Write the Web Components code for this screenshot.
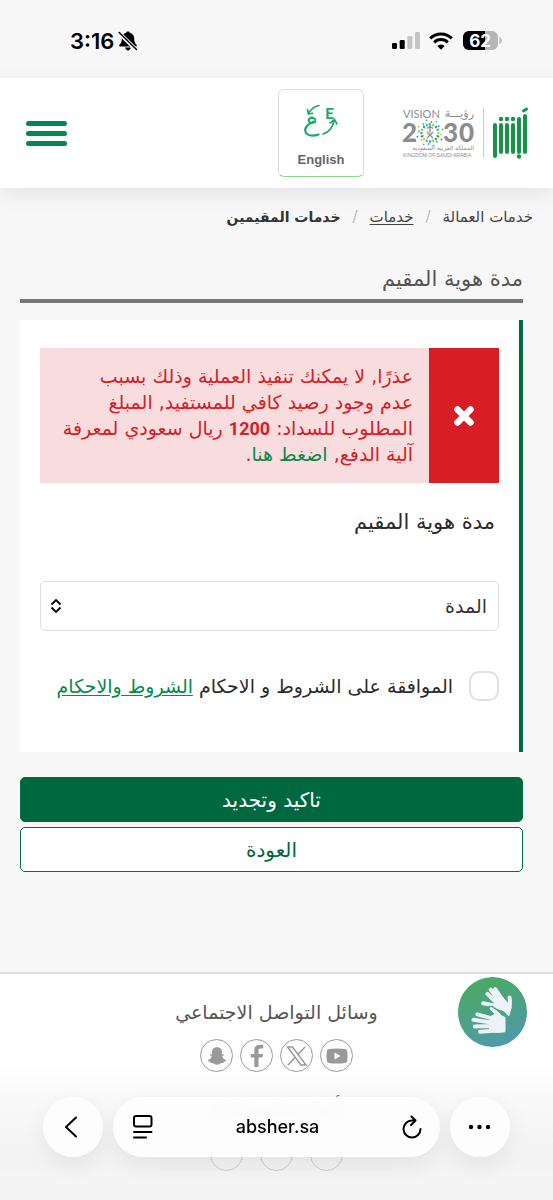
<!DOCTYPE html>
<html lang="ar" dir="rtl">
<head>
<meta charset="utf-8">
<meta name="viewport" content="width=device-width, initial-scale=1">
<title>مدة هوية المقيم</title>
<style>
  body {
    margin: 0;
    background: #f7f7f7;
    color: #2b2b2b;
    font: 19px/26px "DejaVu Sans", sans-serif;
  }
</style>
</head>
<body>
<absher-page></absher-page>

<script>
class StatusBar extends HTMLElement {
  constructor() {
    super();
    this.attachShadow({ mode: 'open' }).innerHTML = `
      <style>
        :host {
          display: flex;
          direction: ltr;
          align-items: center;
          box-sizing: border-box;
          height: 78px;
          padding: 4px 51px 0 70px;
          gap: 9px;
          color: #000;
          font: 600 22px/26px Inter, sans-serif;
        }
        .time { display: flex; align-items: center; gap: 4px; margin-right: auto; }
        svg { display: block; }
        .battery { font: 700 17px Inter, sans-serif; }
      </style>
      <div class="time">
        <span>3:16</span>
        <svg width="20" height="20" viewBox="0 0 20 20">
          <path d="M10 .5c.9 0 1.600.5 1.700 1.300 3 .7 4.500 3 4.500 5.900 0 3.400.9 4.600 2.300 6 .7.700.4 1.700-.6 1.700H2.100c-1 0-1.300-1-.6-1.700 1.400-1.400 2.300-2.600 2.300-6 0-2.900 1.500-5.200 4.500-5.900C8.400 1 9.100.5 10 .5zM7.200 16.600h5.600C12.600 18.300 11.500 19.500 10 19.500s-2.600-1.200-2.800-2.900z"/>
          <path d="M1 2l18 17.500" stroke="#f7f7f7" stroke-width="4"/>
          <path d="M1.200 1.500l17.300 17" stroke="#000" stroke-width="1.500" stroke-linecap="round"/>
        </svg>
      </div>
      <svg width="28" height="18" viewBox="0 0 28 18">
        <rect x="0" y="11" width="5" height="6" rx="1.300"/>
        <rect x="7.700" y="8" width="5" height="9" rx="1.300"/>
        <rect x="15.400" y="4" width="5" height="13" rx="1.300" fill="#c4c4c4"/>
        <rect x="23" y="0" width="5" height="17" rx="1.300" fill="#c4c4c4"/>
      </svg>
      <svg width="24" height="18" viewBox="0 0 24 18" fill="none" stroke="#000" stroke-width="3">
        <path d="M1.200 6.300a15.500 15.500 0 0 1 21.600 0"/>
        <path d="M5.200 10.300a9.800 9.800 0 0 1 13.600 0"/>
        <path d="M12 17.800l-3.700-3.700a5.300 5.300 0 0 1 7.400 0z" fill="#000" stroke="none"/>
      </svg>
      <svg class="battery" width="40" height="20" viewBox="0 0 40 20">
        <clipPath id="cell"><rect x="1" y="0" width="35" height="19" rx="6"/></clipPath>
        <g clip-path="url(#cell)">
          <rect width="36" height="19" fill="#b5b5b5"/>
          <rect width="23" height="19"/>
        </g>
        <path d="M37.500 6c3 1 3 6 0 7z" fill="#b5b5b5"/>
        <text x="18" y="16" text-anchor="middle" fill="#fff">62</text>
      </svg>`;
  }
}

class BrandLogo extends HTMLElement {
  constructor() {
    super();
    // the ring of the emblem: small marks turned round one centre
    const colors = ['#3fae6a', '#8fc75a', '#2a9fc9', '#4fb58c', '#b5cf4a', '#2e8f9b'];
    let ring = '';
    for (let i = 0; i < 16; i++) {
      const c = colors[i % 6];
      const r = i % 2 ? 14 : 16;
      ring += `<g transform="rotate(${i * 22.5} 27 27)" fill="${c}"><path d="M27 20.500l1.300-2-1.300-2-1.300 2z"/><circle cx="28.500" cy="${r}" r=".9"/></g>`;
    }
    this.attachShadow({ mode: 'open' }).innerHTML = `
      <style>
        :host { display: flex; direction: ltr; align-items: center; gap: 9px; }
        svg { display: block; overflow: visible; }
        .rule { width: 1px; height: 50px; background: #ccc; }
      </style>
      <svg width="71" height="54" viewBox="0 0 71 54" fill="#8b8c8e">
        <text x="0" y="12" font-family="Lato" font-size="11">VISION</text>
        <text x="71" y="11" font-family="DejaVu Sans" font-size="11" direction="rtl">رؤيـــة</text>
        <g font-family="Lato" font-weight="900" font-size="26">
          <text x="-1" y="36">2</text>
          <text x="40" y="36">3</text>
          <text x="56" y="36">0</text>
        </g>
        ${ring}
        <path d="M27 20.500v6M24 22.500l3-2 3 2M24 26l6 6M30 26l-6 6" stroke="#8b8c8e" stroke-width="1.300" fill="none"/>
        <text x="71" y="44" font-family="DejaVu Sans" font-size="6" direction="rtl">المملكة العربية السعودية</text>
        <text x="0" y="51" font-family="Liberation Sans" font-size="5">KINGDOM OF SAUDI ARABIA</text>
      </svg>
      <div class="rule"></div>
      <svg width="34" height="52" viewBox="0 0 34 52" stroke="#159447" stroke-width="4" stroke-linecap="round" fill="none">
        <path d="M2 18v31M8 18v27M14 18v27M20 18v27M26 12v33M32 9v36"/>
        <path d="M30.500 4l3-2" stroke-width="3"/>
        <g fill="#159447" stroke="none">
          <circle cx="8" cy="12" r="2.200"/><circle cx="14" cy="12" r="2.200"/><circle cx="20" cy="12" r="2.200"/>
          <circle cx="26" cy="49.500" r="2.200"/>
        </g>
      </svg>`;
  }
}

class SiteHeader extends HTMLElement {
  constructor() {
    super();
    this.attachShadow({ mode: 'open' }).innerHTML = `
      <style>
        :host {
          display: flex;
          align-items: center;
          box-sizing: border-box;
          height: 110px;
          padding: 0 26px;
          gap: 39px;
          background: #fff;
          box-shadow: 0 6px 20px rgba(0, 0, 0, .08);
        }
        button { padding: 0; background: none; cursor: pointer; }
        .lang {
          display: flex;
          direction: ltr;
          flex-direction: column;
          align-items: center;
          justify-content: flex-end;
          box-sizing: border-box;
          width: 86px;
          height: 88px;
          padding-bottom: 8px;
          gap: 15px;
          border: 1px solid #ddd;
          border-bottom-color: #8ed68a;
          border-radius: 6px;
          color: #666;
          font: 700 13px/16px "Liberation Sans", sans-serif;
        }
        .lang svg { display: block; overflow: visible; }
        .menu {
          display: grid;
          gap: 5px;
          width: 41px;
          margin-inline-start: auto;
          border: 0;
        }
        .menu i { height: 5px; border-radius: 3px; background: #068651; }
      </style>
      <brand-logo></brand-logo>
      <button class="lang" lang="en">
        <svg width="36" height="34" viewBox="0 0 36 34" fill="none" stroke="#16ab6b" stroke-width="1.600" stroke-linecap="round">
          <path d="M16 2.500C11 3.500 8 6 5.500 10.500M4.500 6.500l.8 4.500 4.500-.8"/>
          <path d="M20 31c5-1.500 9.500-6 11-13M27 20l4.500-3.500 2.500 4.500"/>
          <text x="22" y="16" fill="#16ab6b" stroke="none" font-family="Lato" font-weight="700" font-size="16">E</text>
          <path d="M12 16c-4-3.500-8.500.5-5 3.500 2 .8 4 0 6-1.500C4 20.500 0 26 3.500 30.500 6.500 33.500 11 33 15.500 31.500" stroke-width="2.200"/>
        </svg>
        English
      </button>
      <button class="menu" aria-label="القائمة"><i></i><i></i><i></i></button>`;
  }
}

class BreadCrumbs extends HTMLElement {
  constructor() {
    super();
    this.attachShadow({ mode: 'open' }).innerHTML = `
      <style>
        :host { display: block; padding: 16px 20px 0; font-size: 15px; line-height: 26px; }
        nav { display: flex; gap: 12px; }
        a { color: #444; text-decoration: none; }
        a.up { text-decoration: underline; text-underline-offset: 2px; }
        b { color: #333; font-size: 14px; }
        i { color: #bbb; font-style: normal; }
      </style>
      <nav>
        <a href="#">خدمات العمالة</a><i>/</i>
        <a class="up" href="#">خدمات</a><i>/</i>
        <b>خدمات المقيمين</b>
      </nav>`;
  }
}

class ErrorAlert extends HTMLElement {
  constructor() {
    super();
    this.attachShadow({ mode: 'open' }).innerHTML = `
      <style>
        :host { display: flex; background: #f8dcde; color: #cf1f28; }
        .mark {
          display: grid;
          place-items: center;
          flex: none;
          width: 70px;
          background: #d71e25;
        }
        p { flex: 1; margin: 0; padding: 15px 16px 16px; }
      </style>
      <div class="mark">
        <svg width="22" height="22" viewBox="0 0 22 22" stroke="#fff" stroke-width="6.500" stroke-linecap="round">
          <path d="M4.500 4.500l13 13M17.500 4.500l-13 13"/>
        </svg>
      </div>
      <p><slot></slot></p>`;
  }
}

class DurationSelect extends HTMLElement {
  constructor() {
    super();
    this.attachShadow({ mode: 'open' }).innerHTML = `
      <style>
        :host { display: block; }
        label { display: block; padding: 0 4px; font-size: 21px; }
        .box { display: grid; align-items: center; margin-top: 46px; }
        .box > * { grid-area: 1 / 1; }
        select {
          appearance: none;
          box-sizing: border-box;
          width: 100%;
          height: 50px;
          padding: 0 11px;
          border: 1px solid #dfe0e4;
          border-radius: 5px;
          background: #fff;
          color: #333;
          font: inherit;
        }
        svg { justify-self: end; margin-inline-end: 10px; pointer-events: none; }
      </style>
      <label for="duration">مدة هوية المقيم</label>
      <div class="box">
        <select id="duration"><option>المدة</option></select>
        <svg width="12" height="16" viewBox="0 0 12 16" fill="none" stroke="#000" stroke-width="1.800">
          <path d="M1.500 6.500L6 2l4.500 4.500M1.500 9.500L6 14l4.500-4.500"/>
        </svg>
      </div>`;
  }
}

class TermsCheck extends HTMLElement {
  constructor() {
    super();
    this.attachShadow({ mode: 'open' }).innerHTML = `
      <style>
        :host { display: flex; align-items: center; gap: 16px; }
        input {
          appearance: none;
          flex: none;
          width: 30px;
          height: 30px;
          margin: 0;
          border: 2px solid #dddfe4;
          border-radius: 10px;
          background: #fff;
        }
        a { color: #078a50; text-underline-offset: 2px; }
      </style>
      <input type="checkbox" id="terms">
      <div>
        <label for="terms">الموافقة على الشروط و الاحكام</label>
        <a href="#">الشروط والاحكام</a>
      </div>`;
  }
}

class ActionButton extends HTMLElement {
  constructor() {
    super();
    this.attachShadow({ mode: 'open' }).innerHTML = `
      <style>
        :host { display: block; }
        button {
          width: 100%;
          height: 45px;
          padding: 0;
          border: 1px solid #006c42;
          border-radius: 5px;
          background: #fff;
          color: #00653e;
          font: inherit;
        }
        :host([primary]) button { background: #00683f; color: #fff; }
      </style>
      <button><slot></slot></button>`;
  }
}

const handsIcon = `
  <svg width="69" height="70" viewBox="26 37 206 206" fill="none" stroke-linecap="round" stroke-linejoin="round">
    <g stroke="#edf1f8" stroke-width="12">
      <path d="M140 122L101 114M142 114L114 86M148 108L124 73M160 105L137 72M176 135c7-10 6-22 4-38"/>
      <path d="M140 114l18-12 14 16 8 10-6 20-16-6-20-14z" fill="#edf1f8"/>
    </g>
    <path d="M122 130l12 8 18 6 18 16" stroke="#4aa287" stroke-width="16"/>
    <g stroke="#edf1f8" stroke-width="12">
      <path d="M138 162L84 147M130 172L72 163M130 182L76 183M140 195l-48 4M150 152L126 128"/>
      <path d="M126 158l14-8 22 9v36l-18 2-20-3z" fill="#edf1f8"/>
    </g>
    <path d="M120 138c-6-8-2-17 8-14l14 9 20 7 14 14" stroke="#4aa287" stroke-width="4"/>
  </svg>`;

class SiteFooter extends HTMLElement {
  constructor() {
    super();
    this.attachShadow({ mode: 'open' }).innerHTML = `
      <style>
        :host {
          display: block;
          position: relative;
          padding-top: 25px;
          border-top: 2px solid #ddd;
          background: linear-gradient(#fff 90px, #f3f3f3);
          color: #555;
          text-align: center;
        }
        h2 { margin: 0; font-size: 19px; line-height: 26px; font-weight: 400; }
        .row { display: flex; justify-content: center; gap: 7px; margin: 14px 0 22px; }
        .row.wide { gap: 17px; margin: 18px 0 0; }
        a {
          display: grid;
          place-items: center;
          width: 31px;
          height: 31px;
          border: 1px solid #999;
          border-radius: 50%;
        }
        svg { display: block; }
        .sign {
          position: absolute;
          top: 0;
          left: calc(100% - 98px);
          padding: 0;
          border: 3px solid #fff;
          border-radius: 50%;
          background: linear-gradient(160deg, #4aa966 15%, #5098b0 95%);
        }
      </style>
      <h2>وسائل التواصل الاجتماعي</h2>
      <div class="row">
        <a href="#" aria-label="YouTube"><svg width="22" height="16" viewBox="0 0 22 16"><path fill="#999" fill-rule="evenodd" d="M3 1Q11 0 19 1q2 .3 2.200 2Q22 8 21.200 13q-.2 1.700-2.200 2Q11 16 3 15q-2-.3-2.200-2Q0 8 .8 3 1 1.300 3 1zM8.500 4.500v7L14.500 8z"/></svg></a>
        <a href="#" aria-label="X"><svg width="22" height="20" viewBox="0 0 22 20" fill="none" stroke="#999" stroke-width="1.500"><path d="M1.500 1h5L20 19h-5zM19 1l-7.500 8M9.300 11.300L2 19"/></svg></a>
        <a href="#" aria-label="Facebook"><svg width="14" height="24" viewBox="0 0 14 24"><path fill="#999" d="M4.300 23V13.500H.8V10h3.500V6.500C4.300 2.800 6.500.8 9.800.8h3.400v3.700H11c-1.800 0-2.500.8-2.500 2.300V10h4.500l-.6 3.500H8.500V23z"/></svg></a>
        <a href="#" aria-label="Snapchat"><svg width="20" height="20" viewBox="0 0 20 20"><path fill="#999" d="M10 1.200c3.300 0 5 2.200 5 5v2.200l1.800-.3c.8.500.2 1.400-1.600 2.200.5 2 2 3.300 4 3.800.4.900-.9 1.400-2.400 1.700l-.5 1.300c-1.600-.3-2.500-.1-3.400.6-1.900 1.500-3.900 1.500-5.800 0-.9-.7-1.800-.9-3.400-.6l-.5-1.300c-1.500-.3-2.800-.8-2.400-1.700 2-.5 3.500-1.800 4-3.800-1.800-.8-2.400-1.700-1.600-2.200l1.800.3V6.200c0-2.800 1.700-5 5-5z"/></svg></a>
      </div>
      <h2>أدوات المساعدة</h2>
      <div class="row wide">
        <a href="#" aria-label="تكبير"></a>
        <a href="#" aria-label="تصغير"></a>
        <a href="#" aria-label="التباين"></a>
      </div>
      <button class="sign" aria-label="لغة الإشارة">${handsIcon}</button>`;
  }
}

class BrowserBar extends HTMLElement {
  constructor() {
    super();
    this.attachShadow({ mode: 'open' }).innerHTML = `
      <style>
        :host {
          display: flex;
          direction: ltr;
          position: fixed;
          left: 0;
          right: 0;
          bottom: 0;
          gap: 10px;
          padding: 28px 43px 43px;
          background: linear-gradient(rgba(244, 244, 244, 0), rgba(243, 243, 243, .6) 80%);
          color: #000;
          font: 500 18px/26px Inter, sans-serif;
        }
        button {
          display: grid;
          place-items: center;
          padding: 0;
          border: 0;
          background: none;
          color: #000;
        }
        .round, .address {
          height: 60px;
          border-radius: 30px;
          background: rgba(253, 253, 253, .95);
          box-shadow: 0 8px 24px rgba(0, 0, 0, .07);
          backdrop-filter: blur(5px);
        }
        .round { flex: none; width: 60px; }
        .address {
          display: flex;
          flex: 1;
          align-items: center;
          justify-content: space-between;
          box-sizing: border-box;
          padding: 0 18px 0 20px;
        }
        svg { display: block; fill: none; stroke: #000; stroke-width: 2; stroke-linecap: round; stroke-linejoin: round; }
      </style>
      <button class="round" aria-label="رجوع"><svg width="18" height="22" viewBox="0 0 18 22"><path d="M12 1.500L2 11l10 9.500"/></svg></button>
      <div class="address">
        <button aria-label="قائمة الصفحة"><svg width="20" height="24" viewBox="0 0 20 24"><rect x="1" y="1" width="17.500" height="10.500" rx="2"/><path d="M1 17h17.500M1 22.500h12"/></svg></button>
        <span>absher.sa</span>
        <button aria-label="تحديث"><svg width="20" height="25" viewBox="0 0 20 25"><path d="M18.500 14A8.500 8.500 0 1 1 10 5.500h3.500M9.500 1.500l4 4-4.500 4.500"/></svg></button>
      </div>
      <button class="round" aria-label="المزيد"><svg width="24" height="6" viewBox="0 0 24 6"><g fill="#000" stroke="none"><circle cx="3" cy="3" r="2.200"/><circle cx="11.500" cy="3" r="2.200"/><circle cx="20" cy="3" r="2.200"/></g></svg></button>`;
  }
}

class AbsherPage extends HTMLElement {
  constructor() {
    super();
    this.attachShadow({ mode: 'open' }).innerHTML = `
      <style>
        :host {
          display: flex;
          flex-direction: column;
          height: 100vh;
          overflow: hidden;
        }
        :host > * { flex: none; }
        main { margin-bottom: 100px; padding-inline: 30px 20px; }
        h1 {
          margin: 36px 0 17px;
          padding-bottom: 7px;
          border-bottom: 4px solid #777;
          color: #555;
          font-size: 21px;
          line-height: 26px;
          font-weight: 400;
        }
        .card {
          display: grid;
          padding: 28px 20px 51px;
          gap: 26px;
          margin-bottom: 25px;
          border-inline-start: 4px solid #00693f;
          background: #fff;
        }
        .card terms-check { margin-top: 14px; }
        .actions { display: grid; gap: 5px; font-size: 20px; }
        b { font: 700 18px/20px Roboto, sans-serif; }
        a { color: #078a50; text-decoration: none; }
        site-footer { flex: 1; }
      </style>
      <status-bar></status-bar>
      <site-header></site-header>
      <bread-crumbs></bread-crumbs>
      <main>
        <h1>مدة هوية المقيم</h1>
        <div class="card">
          <error-alert>عذرًا, لا يمكنك تنفيذ العملية وذلك بسبب<br>
            عدم وجود رصيد كافي للمستفيد, المبلغ<br>
            المطلوب للسداد: <b>1200</b> ريال سعودي لمعرفة<br>
            آلية الدفع, <a href="#">اضغط هنا</a>.</error-alert>
          <duration-select></duration-select>
          <terms-check></terms-check>
        </div>
        <div class="actions">
          <action-button primary>تاكيد وتجديد</action-button>
          <action-button>العودة</action-button>
        </div>
      </main>
      <site-footer></site-footer>
      <browser-bar></browser-bar>`;
  }
}

customElements.define('status-bar', StatusBar);
customElements.define('brand-logo', BrandLogo);
customElements.define('site-header', SiteHeader);
customElements.define('bread-crumbs', BreadCrumbs);
customElements.define('error-alert', ErrorAlert);
customElements.define('duration-select', DurationSelect);
customElements.define('terms-check', TermsCheck);
customElements.define('action-button', ActionButton);
customElements.define('site-footer', SiteFooter);
customElements.define('browser-bar', BrowserBar);
customElements.define('absher-page', AbsherPage);
</script>
</body>
</html>
